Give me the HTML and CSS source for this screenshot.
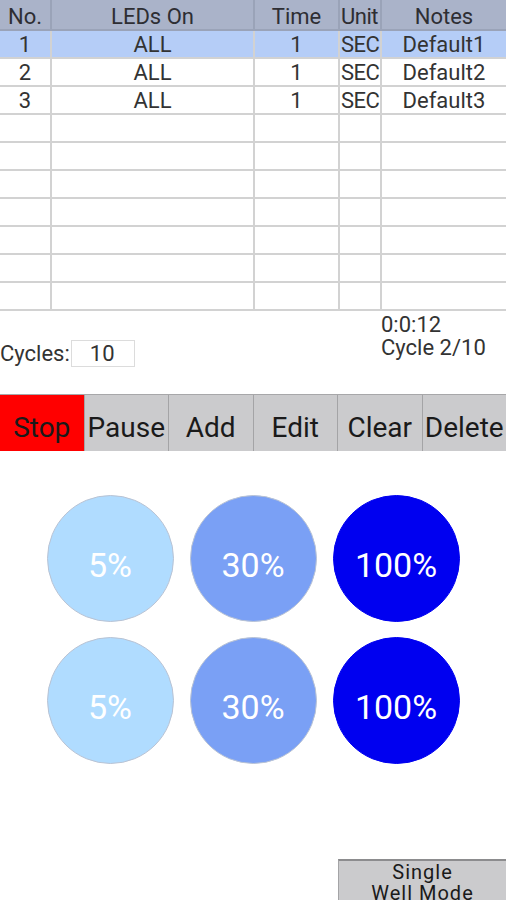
FILE: index.html
```html
<!DOCTYPE html>
<html>
<head>
  <meta charset="utf-8">
  <meta name="viewport" content="width=device-width">
  <title>LED Sequence</title>
  <link rel="stylesheet" href="styles.css">
</head>
<body>

  <table class="steps">
    <colgroup>
      <col class="c-no">
      <col class="c-leds">
      <col class="c-time">
      <col class="c-unit">
      <col class="c-notes">
    </colgroup>
    <thead>
      <tr>
        <th>No.</th>
        <th>LEDs On</th>
        <th>Time</th>
        <th class="unit">Unit</th>
        <th>Notes</th>
      </tr>
    </thead>
    <tbody id="rows"></tbody>
  </table>

  <div class="info">
    <div class="cycles">
      <span>Cycles:</span>
      <span class="box">10</span>
    </div>
    <div class="timer">
      <div>0:0:12</div>
      <div>Cycle 2/10</div>
    </div>
  </div>

  <div class="actions">
    <button class="stop">Stop</button>
    <button>Pause</button>
    <button>Add</button>
    <button>Edit</button>
    <button>Clear</button>
    <button>Delete</button>
  </div>

  <div class="wells">
    <div class="well low">5%</div>
    <div class="well mid">30%</div>
    <div class="well full">100%</div>
    <div class="well low">5%</div>
    <div class="well mid">30%</div>
    <div class="well full">100%</div>
  </div>

  <div class="footer">
    <button class="mode">Single<br>Well Mode</button>
  </div>

  <script>
    const steps = [
      { no: 1, leds: 'ALL', time: 1, unit: 'SEC', notes: 'Default1' },
      { no: 2, leds: 'ALL', time: 1, unit: 'SEC', notes: 'Default2' },
      { no: 3, leds: 'ALL', time: 1, unit: 'SEC', notes: 'Default3' }
    ];
    let html = '';
    for (let i = 0; i < 10; i++) {
      const s = steps[i];
      if (s) {
        html += `<tr class="${i === 0 ? 'sel' : ''}">
          <td>${s.no}</td><td>${s.leds}</td><td>${s.time}</td>
          <td class="unit">${s.unit}</td><td>${s.notes}</td></tr>`;
      } else {
        html += '<tr><td></td><td></td><td></td><td></td><td></td></tr>';
      }
    }
    document.getElementById('rows').innerHTML = html;
  </script>

</body>
</html>
```

FILE: styles.css
```css
body {
  margin: 0;
  width: 506px;
  height: 900px;
  overflow: hidden;
  font-family: Roboto, "Noto Sans", sans-serif;
  color: #333;
  background: #fff;
}
.steps {
  width: 506px;
  border-collapse: collapse;
  table-layout: fixed;
  font-size: 22px;
}
.c-no { width: 51px; }
.c-leds { width: 203px; }
.c-time { width: 85px; }
.c-unit { width: 42px; }
.c-notes { width: 125px; }
.steps th, .steps td {
  border: 2px solid #d2d2d2;
  padding: 0;
  text-align: center;
  font-weight: normal;
  white-space: nowrap;
  overflow: hidden;
  box-sizing: border-box;
}
.steps th {
  height: 30px;
  line-height: 24px;
  padding-top: 4px;
  background: #aab3c9;
  border-color: #9aa3b8;
  border-top: none;
  color: #2e2e33;
}
.steps td {
  height: 28px;
  line-height: 24px;
  padding-top: 2px;
}
.steps th:first-child, .steps td:first-child { border-left: none; }
.steps th:last-child, .steps td:last-child { border-right: none; }
.steps .unit {
  text-align: left;
  padding-left: 1px;
  letter-spacing: -0.5px;
}
.steps tr.sel td {
  background: #b5cdf7;
}
.info {
  display: flex;
  height: 83px;
}
.cycles {
  display: flex;
  align-items: center;
  margin-top: 28px;
  height: 28px;
  font-size: 22px;
}
.box {
  display: inline-block;
  width: 62px;
  height: 25px;
  line-height: 26px;
  margin-left: 1px;
  border: 1px solid #dcdcdc;
  text-indent: 18px;
}
.timer {
  margin-left: auto;
  width: 125px;
  margin-top: 2px;
  font-size: 22px;
  line-height: 23px;
}
.actions {
  display: flex;
  height: 57px;
  background: #cbcbcd;
  border-top: 1px solid #a7a7a9;
  box-sizing: border-box;
}
.actions button {
  flex: 1;
  min-width: 0;
  margin: 0;
  border: none;
  border-right: 1px solid #a4a4a6;
  background: #cbcbcd;
  font-family: inherit;
  font-size: 28px;
  color: #1a1a1a;
  padding: 9px 0 0;
  white-space: nowrap;
  overflow: hidden;
}
.actions button:last-child { border-right: none; }
.actions .stop {
  background: #ff0000;
}
.wells {
  display: grid;
  grid-template-columns: repeat(3, 127px);
  gap: 15px 16px;
  justify-content: center;
  margin-top: 44px;
}
.well {
  height: 127px;
  border-radius: 50%;
  display: flex;
  align-items: center;
  justify-content: center;
  padding-top: 12px;
  color: #fff;
  font-size: 34px;
  box-sizing: border-box;
  border: 1px solid #b9c3d4;
}
.well.low { background: #b0dcff; }
.well.mid { background: #7aa0f5; }
.well.full { background: #0000f0; border-color: #0000f0; }
.footer {
  display: flex;
  justify-content: flex-end;
  margin-top: 95px;
}
.mode {
  width: 168px;
  height: 50px;
  margin: 0;
  border: none;
  border-top: 2px solid #8c8c8e;
  border-left: 1px solid #a4a4a6;
  background: #cbcbcd;
  font-family: inherit;
  font-size: 20px;
  line-height: 21px;
  letter-spacing: 1px;
  color: #1a1a1a;
  padding: 1px 0 0;
  display: flex;
  flex-direction: column;
  align-items: center;
  justify-content: flex-start;
}
```
